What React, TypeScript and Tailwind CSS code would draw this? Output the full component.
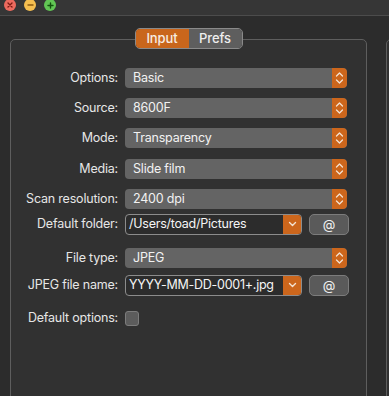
import React from "react";

const Stepper = () => (
  <div className="w-[15px] h-full bg-[#cc661c] rounded-r-[4px] flex items-center justify-center">
    <svg width="9" height="14" viewBox="0 0 9 14" fill="none" stroke="#f3e2d2" strokeWidth="1.3" strokeLinecap="round" strokeLinejoin="round">
      <path d="M1.5 5 L4.5 2 L7.5 5" />
      <path d="M1.5 9 L4.5 12 L7.5 9" />
    </svg>
  </div>
);

const Popup = ({ value }: { value: string }) => (
  <div className="w-[222px] h-[20px] rounded-[4px] bg-[#646464] flex items-stretch overflow-hidden">
    <div className="flex-1 pl-[8px] flex items-center text-[12.5px] tracking-[-0.2px] text-[#f2f2f2] leading-none whitespace-nowrap">{value}</div>
    <Stepper />
  </div>
);

const Combo = ({ value }: { value: string }) => (
  <div className="flex items-center gap-[7px]">
    <div className="w-[177px] h-[21px] rounded-[4px] border border-[#8c8c8c] bg-[#2c2c2c] flex items-stretch overflow-hidden">
      <div className="flex-1 pl-[3px] flex items-center text-[12.5px] tracking-[-0.25px] text-[#f5f5f5] leading-none whitespace-nowrap overflow-hidden">{value}</div>
      <div className="w-[18px] shrink-0 bg-[#cc661c] flex items-center justify-center">
        <svg width="9" height="6" viewBox="0 0 9 6" fill="none" stroke="#f3e2d2" strokeWidth="1.4" strokeLinecap="round" strokeLinejoin="round">
          <path d="M1.5 1.5 L4.5 4.5 L7.5 1.5" />
        </svg>
      </div>
    </div>
    <div className="w-[40px] h-[21px] rounded-[5px] border border-[#7c7c7c] bg-[#5a5a5a] flex items-center justify-center text-[13px] text-[#eeeeee] leading-none">@</div>
  </div>
);

const Row = ({ label, children, mt }: { label: string; children: React.ReactNode; mt: string }) => (
  <div className={`flex items-center h-[20px] ${mt}`}>
    <div className="w-[107px] text-right text-[12.5px] tracking-[-0.2px] text-[#e6e6e6] leading-none whitespace-nowrap">{label}</div>
    <div className="ml-[7px]">{children}</div>
  </div>
);

export default function App() {
  return (
    <div
      className="w-[389px] h-[396px] bg-[#2c2c2c] overflow-hidden flex flex-col"
      style={{ fontFamily: "Inter, 'Liberation Sans', sans-serif" }}
    >
      <div className="h-[16px] shrink-0 bg-[#363636] border-b border-[#4c4c4c] flex items-start pl-[4px] gap-[8px]">
        <div className="-mt-[1px] w-[12px] h-[12px] rounded-full bg-[#ec6a5e] flex items-center justify-center">
          <svg width="6" height="6" viewBox="0 0 6 6" stroke="#7a1a12" strokeWidth="1.3" strokeLinecap="round">
            <path d="M1 1 L5 5 M5 1 L1 5" />
          </svg>
        </div>
        <div className="-mt-[1px] w-[12px] h-[12px] rounded-full bg-[#f4be4f] flex items-center justify-center">
          <svg width="7" height="2" viewBox="0 0 7 2" stroke="#8a5a10" strokeWidth="1.4" strokeLinecap="round">
            <path d="M1 1 L6 1" />
          </svg>
        </div>
        <div className="-mt-[1px] w-[12px] h-[12px] rounded-full bg-[#61c554] flex items-center justify-center">
          <svg width="7" height="7" viewBox="0 0 7 7" stroke="#12530e" strokeWidth="1.4" strokeLinecap="round">
            <path d="M1 3.5 L6 3.5 M3.5 1 L3.5 6" />
          </svg>
        </div>
      </div>

      <div className="flex flex-1 pl-[10px] pt-[23px] gap-[19px]">
        <div className="relative w-[357px] h-[400px] shrink-0 border border-[#5e5e5e] rounded-[5px] bg-[#313131]">
          <div className="absolute left-1/2 -translate-x-1/2 -top-[12px] flex h-[21px] rounded-[5px] border border-[#8a8a8a] overflow-hidden text-[13px] tracking-[-0.1px] leading-none font-medium">
            <div className="w-[53px] bg-[#c9661c] text-[#f7ece2] flex items-center justify-center">Input</div>
            <div className="w-[53px] bg-[#5e5e5e] text-[#eeeeee] flex items-center justify-center">Prefs</div>
          </div>

          <div className="flex flex-col">
            <Row label="Options:" mt="mt-[28px]"><Popup value="Basic" /></Row>
            <Row label="Source:" mt="mt-[10px]"><Popup value="8600F" /></Row>
            <Row label="Mode:" mt="mt-[10px]"><Popup value="Transparency" /></Row>
            <Row label="Media:" mt="mt-[11px]"><Popup value="Slide film" /></Row>
            <Row label="Scan resolution:" mt="mt-[10px]"><Popup value="2400 dpi" /></Row>
            <Row label="Default folder:" mt="mt-[5px]"><Combo value="/Users/toad/Pictures" /></Row>
            <Row label="File type:" mt="mt-[14px]"><Popup value="JPEG" /></Row>
            <Row label="JPEG file name:" mt="mt-[7px]"><Combo value="YYYY-MM-DD-0001+.jpg" /></Row>
            <Row label="Default options:" mt="mt-[13px]">
              <div className="w-[14px] h-[15px] rounded-[3px] border border-[#7c7c7c] bg-[#5c5c5c]" />
            </Row>
          </div>
        </div>
        <div className="w-[30px] h-[400px] shrink-0 border border-[#5e5e5e] rounded-[5px] bg-[#313131]" />
      </div>
    </div>
  );
}
